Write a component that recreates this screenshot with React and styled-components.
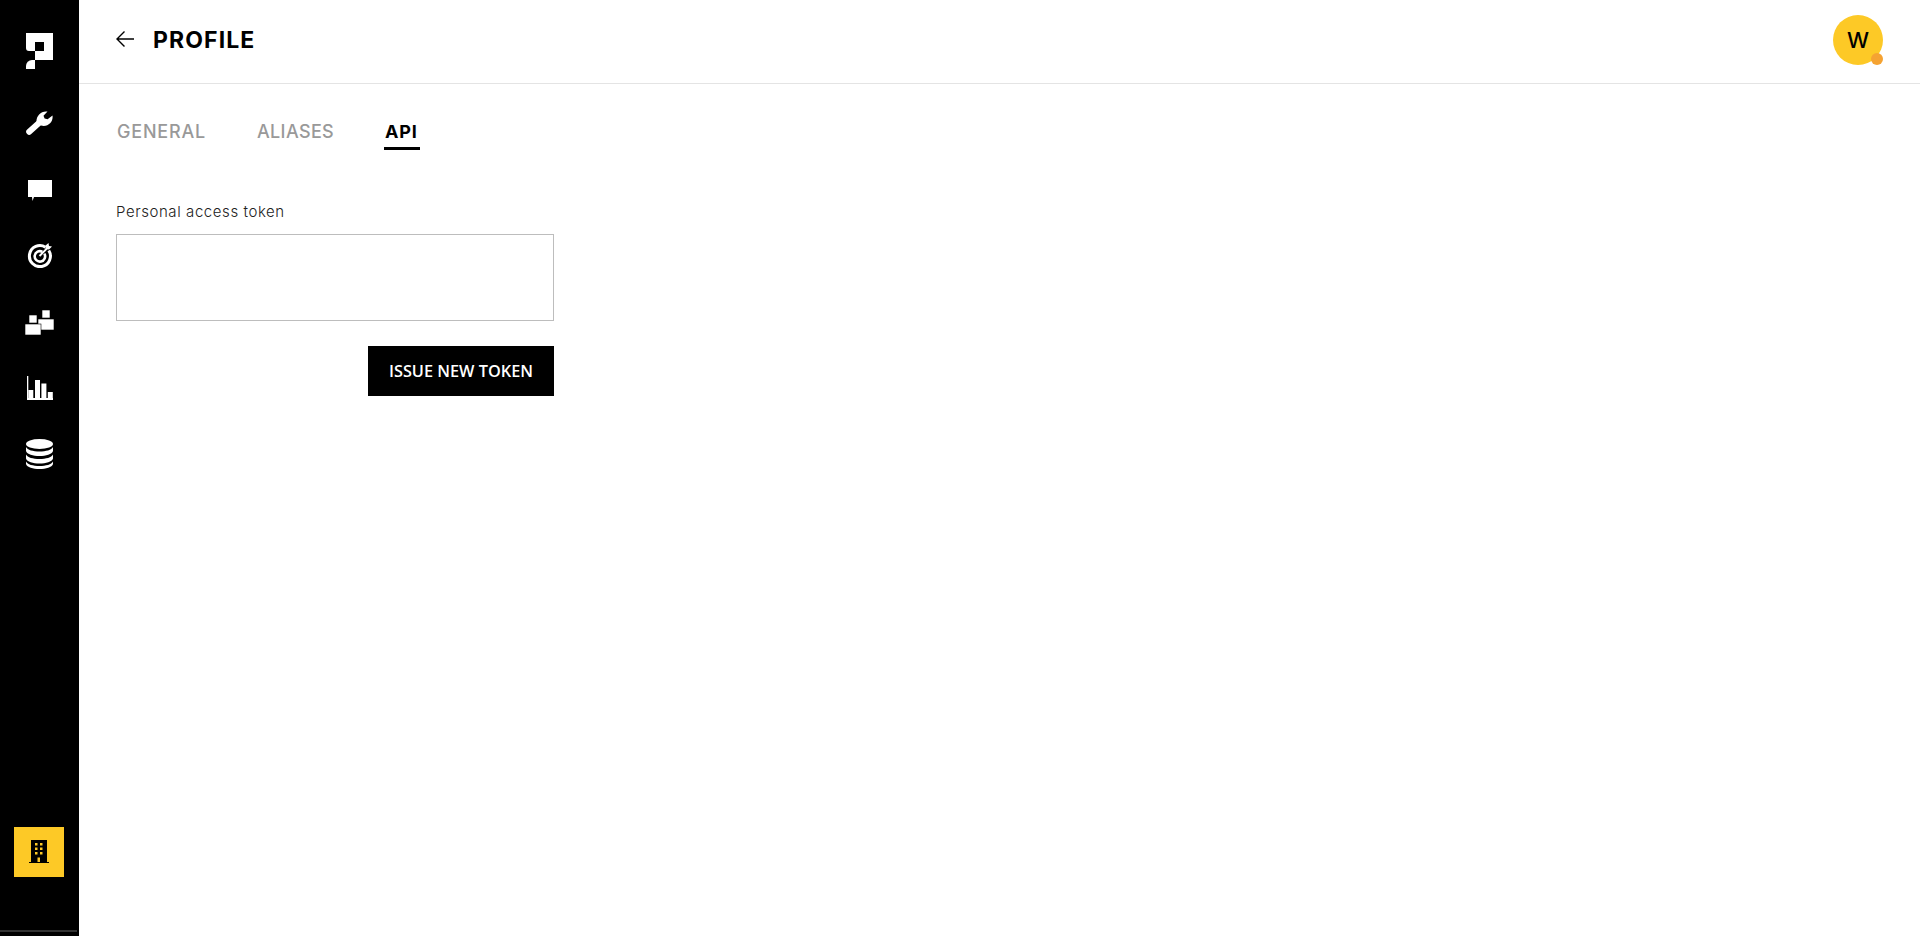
import React from 'react';
import styled, { createGlobalStyle } from 'styled-components';

const GlobalStyle = createGlobalStyle`
  html, body {
    margin: 0;
    padding: 0;
    height: 100%;
    background: #fff;
    font-family: Inter, "Open Sans", sans-serif;
  }
  * { box-sizing: border-box; }
`;

const Page = styled.div`
  display: flex;
  height: 936px;
  overflow: hidden;
`;

const Sidebar = styled.nav`
  position: relative;
  width: 79px;
  flex-shrink: 0;
  background: #000;
  display: flex;
  flex-direction: column;
  align-items: center;
  padding: 18px 0 59px;
  color: #fff;
`;

const LogoSlot = styled.div`
  height: 72.4px;
  padding-top: 15px;
  align-self: stretch;
  display: flex;
  justify-content: center;
  align-items: flex-start;
`;

const NavItem = styled.a`
  height: 66.2px;
  align-self: stretch;
  display: flex;
  align-items: center;
  justify-content: center;
  color: #fff;
`;

const Spacer = styled.div`
  flex: 1;
`;

const OrgButton = styled.button`
  width: 50px;
  height: 50px;
  margin-right: 1px;
  border: 0;
  padding: 0;
  background: #fdc926;
  display: flex;
  align-items: center;
  justify-content: center;
`;

const ScrollLine = styled.div`
  position: absolute;
  left: 0;
  right: 2px;
  bottom: 4px;
  height: 2px;
  background: #333;
`;

const Main = styled.main`
  flex: 1;
  display: flex;
  flex-direction: column;
  min-width: 0;
`;

const Header = styled.header`
  height: 84px;
  flex-shrink: 0;
  border-bottom: 1px solid #e4e4e4;
  display: flex;
  align-items: center;
  padding: 0 37px 5px 36px;
`;

const BackButton = styled.button`
  border: 0;
  background: none;
  padding: 0;
  width: 20px;
  height: 20px;
  margin-right: 18px;
  display: flex;
  align-items: center;
  justify-content: center;
  color: #000;
`;

const Title = styled.h1`
  margin: 2px 0 0;
  font-size: 23px;
  font-weight: 700;
  letter-spacing: 1.1px;
  color: #000;
  flex: 1;
`;

const Avatar = styled.div`
  position: relative;
  width: 50px;
  height: 50px;
  margin-top: 1px;
  border-radius: 50%;
  background: #fdc926;
  color: #000;
  display: flex;
  align-items: center;
  justify-content: center;
  font-size: 22px;
  font-weight: 500;
`;

const StatusDot = styled.span`
  position: absolute;
  right: 0;
  bottom: 0;
  width: 12px;
  height: 12px;
  border-radius: 50%;
  background: #f5a332;
`;

const Content = styled.section`
  padding: 36px 36px 31px 37px;
  width: 510px;
`;

const Tabs = styled.div`
  display: flex;
  gap: 51px;
  padding-left: 1px;
`;

const Tab = styled.a`
  position: relative;
  height: 30px;
  line-height: 24px;
  font-size: 18px;
  font-weight: ${p => (p.$active ? 700 : 500)};
  color: ${p => (p.$active ? '#000' : '#999')};
  letter-spacing: ${p => p.$tracking || 0.8}px;

  ${p => p.$active && `
    &::after {
      content: '';
      position: absolute;
      left: -1px;
      right: -2px;
      bottom: 0;
      height: 3px;
      background: #000;
    }
  `}
`;

const Field = styled.div`
  margin-top: 52px;
  display: flex;
  flex-direction: column;
`;

const Label = styled.label`
  font-size: 15px;
  line-height: 20px;
  letter-spacing: 0.58px;
  font-weight: 300;
  color: #222;
  margin-bottom: 12px;
`;

const TokenBox = styled.textarea`
  display: block;
  width: 438px;
  height: 87px;
  border: 1px solid #bdbdbd;
  border-radius: 0;
  resize: none;
  outline: none;
  background: #fff;
`;

const Actions = styled.div`
  width: 438px;
  display: flex;
  justify-content: flex-end;
  margin-top: 25px;
`;

const PrimaryButton = styled.button`
  width: 186px;
  height: 50px;
  border: 0;
  background: #000;
  color: #fff;
  font-family: "Open Sans", sans-serif;
  font-size: 16.3px;
  font-weight: 600;
`;

const Logo = () => (
  <svg width="27" height="36" viewBox="0 0 27 36" fill="#fff">
    <path fillRule="evenodd" d="M0 0H27V27H9V18H3A3 3 0 0 1 0 15ZM9 9V18H18V9Z" />
    <path d="M9 27V36H0V33A6 6 0 0 1 6 27Z" />
  </svg>
);

const WrenchIcon = () => (
  <svg width="27" height="24" viewBox="0 0 27 24" fill="none">
    <path d="M3.200 20.800L13.500 11.500" stroke="#fff" strokeWidth="6" strokeLinecap="round" />
    <path d="M10.500 11C10 5 15 -.5 21.500 .5L17.500 4.800L18.600 7.600L21.600 8.200L26.500 4.500C27.500 10.500 22 16.500 15 14.500Z" fill="#fff" />
  </svg>
);

const ChatIcon = () => (
  <svg width="24" height="23" viewBox="0 -2 24 23" fill="#fff">
    <path d="M0 0H24V17H6L4.500 21L4 17H0Z" />
  </svg>
);

const TargetIcon = () => (
  <svg width="25" height="25" viewBox="0 0 25 25" fill="none" stroke="#fff">
    <path d="M18.500 4.200A10.500 10.500 0 1 0 21.800 7.500" strokeWidth="3" />
    <path d="M15.400 8.800A5.200 5.200 0 1 0 17.300 10.600" strokeWidth="2.600" />
    <path d="M12.500 13L21 4.400" strokeWidth="2" />
    <path d="M18.500 6V2.500L21.500 0L22 3L25 3.500L22 6.500Z" fill="#fff" stroke="none" />
  </svg>
);

const BlocksIcon = () => (
  <svg width="29" height="25" viewBox="0 0 29 25" fill="#fff" stroke="#000" strokeWidth="0.6">
    <rect x="4" y="5" width="8" height="8" />
    <rect x="17" y="0" width="8" height="8" />
    <rect x="13" y="9" width="16" height="11" />
    <rect x="0" y="14" width="16" height="11" />
  </svg>
);

const ChartIcon = () => (
  <svg width="26" height="24" viewBox="0 0 26 24" fill="#fff">
    <rect x="0" y="0" width="1.300" height="24" />
    <rect x="0" y="22" width="26" height="2" />
    <rect x="1.300" y="14" width="5" height="9" />
    <rect x="8" y="4" width="5" height="19" />
    <rect x="14.400" y="7.500" width="5" height="15.500" />
    <rect x="20.800" y="16" width="5" height="7" />
  </svg>
);

const DatabaseIcon = () => (
  <svg width="27" height="30" viewBox="0 0 27 30" fill="#fff">
    <ellipse cx="13.500" cy="5" rx="13.500" ry="5" />
    <path d="M0 8C1.500 11 7 12.500 13.500 12.500S25.500 11 27 8V12C26 15.500 20 17 13.500 17S1 15.500 0 12Z" />
    <path d="M0 15.500C1.500 18.500 7 20 13.500 20S25.500 18.500 27 15.500V19.500C26 23 20 24.500 13.500 24.500S1 23 0 19.500Z" />
    <path d="M0 22.500C1.500 25.500 7 27 13.500 27S25.500 25.500 27 22.500V25C26 28.500 20 30 13.500 30S1 28.500 0 25Z" />
  </svg>
);

const BuildingIcon = () => (
  <svg width="20" height="24" viewBox="0 0 20 24" fill="#000">
    <path d="M2 0H18V22H20V23H0V22H2Z" />
    <g fill="#fdc926">
      <rect x="6" y="3" width="2.500" height="2.500" />
      <rect x="11" y="3" width="2.500" height="2.500" />
      <rect x="6" y="7.500" width="2.500" height="2.500" />
      <rect x="11" y="7.500" width="2.500" height="2.500" />
      <rect x="6" y="12" width="2.500" height="2.500" />
      <rect x="11" y="12" width="2.500" height="2.500" />
      <rect x="8.500" y="17.500" width="2.500" height="4.500" />
    </g>
  </svg>
);

const BackArrow = () => (
  <svg width="20" height="18" viewBox="0 0 20 18" fill="none" stroke="#000" strokeWidth="1.400">
    <path d="M19 9H2M9.500 1.500L2 9L9.500 16.500" />
  </svg>
);

const navIcons = [WrenchIcon, ChatIcon, TargetIcon, BlocksIcon, ChartIcon, DatabaseIcon];

export default function App() {
  return (
    <Page>
      <GlobalStyle />
      <Sidebar>
        <LogoSlot>
          <Logo />
        </LogoSlot>
        {navIcons.map((Icon, i) => (
          <NavItem key={i}>
            <Icon />
          </NavItem>
        ))}
        <Spacer />
        <OrgButton>
          <BuildingIcon />
        </OrgButton>
        <ScrollLine />
      </Sidebar>
      <Main>
        <Header>
          <BackButton>
            <BackArrow />
          </BackButton>
          <Title>PROFILE</Title>
          <Avatar>
            W
            <StatusDot />
          </Avatar>
        </Header>
        <Content>
          <Tabs>
            <Tab>GENERAL</Tab>
            <Tab $tracking={0.35}>ALIASES</Tab>
            <Tab $active>API</Tab>
          </Tabs>
          <Field>
            <Label>Personal access token</Label>
            <TokenBox />
          </Field>
          <Actions>
            <PrimaryButton>ISSUE NEW TOKEN</PrimaryButton>
          </Actions>
        </Content>
      </Main>
    </Page>
  );
}
